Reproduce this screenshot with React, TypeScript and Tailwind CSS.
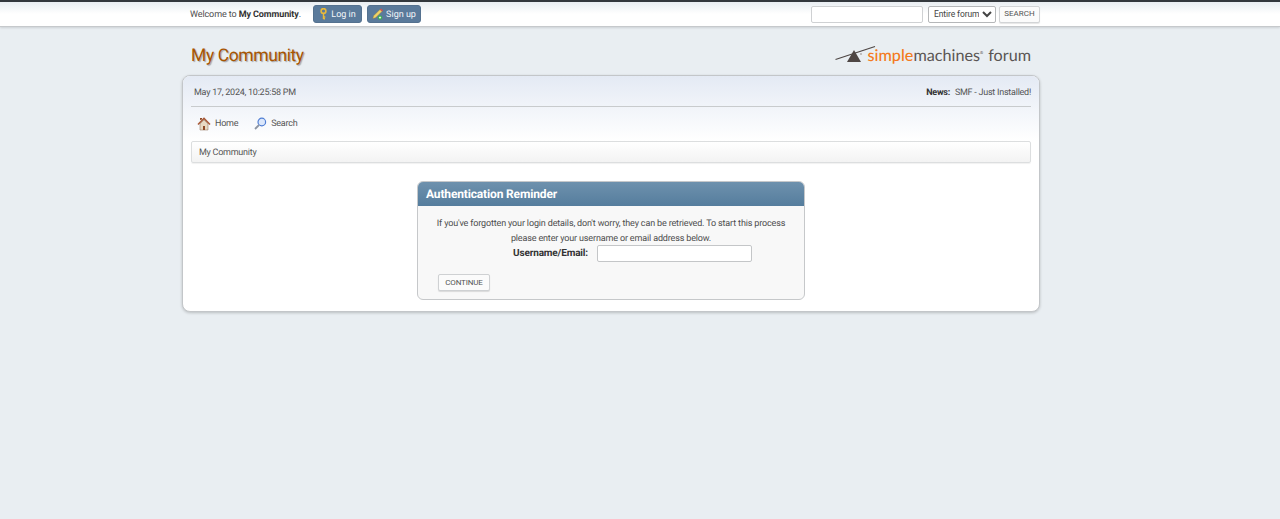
export default function App() {
  const font = { fontFamily: 'Roboto,"Open Sans",sans-serif' };
  const lato = { fontFamily: "Lato,sans-serif" };
  return (
    <div className="min-h-[519px] bg-[#e9eef2] text-[9px] tracking-[-0.25px] text-[#4d4d4d]" style={{ ...font, textRendering: "geometricPrecision" }}>
      {/* top bar */}
      <div className="h-[27px] border-t-2 border-t-[#33383d] border-b border-b-[#c6c9cc] bg-gradient-to-b from-[#e9eef2] to-white to-50% shadow-[0_1px_2px_rgba(0,0,0,0.12)]">
        <div className="ml-[182px] flex h-full w-[858px] items-center justify-between pl-[8px]">
          <div className="flex items-center">
            <span className="mt-[3px] w-[111px] whitespace-nowrap tracking-[-0.1px]">Welcome to <b className="text-[#333]">My Community</b>.</span>
            <a className="ml-[12px] flex h-[18px] w-[49px] items-center justify-center gap-[3px] rounded-[3px] border border-[#54718f] bg-[#5a7a9b] text-[#f3f6f9]">
              <svg width="9" height="12" viewBox="0 0 9 12"><circle cx="4.5" cy="3" r="2.4" fill="none" stroke="#e8b93a" strokeWidth="1.6"/><path d="M4.5 5v6M4.5 9h1.8M4.5 10.8h1.5" stroke="#e8b93a" strokeWidth="1.4" fill="none"/></svg>
              <span className="mt-[3px] tracking-normal">Log in</span>
            </a>
            <a className="ml-[5px] flex h-[18px] w-[54px] items-center justify-center gap-[2px] rounded-[3px] border border-[#54718f] bg-[#5a7a9b] text-[#f3f6f9]">
              <svg width="12" height="12" viewBox="0 0 12 12"><path d="M0.8 10.6 1.6 7.8 8 1.4 10 3.4 3.6 9.8z" fill="#f0d264" stroke="#8a7a40" strokeWidth="0.4"/><path d="M8 1.4l1-1 2 2-1 1z" fill="#d9534f"/><circle cx="8" cy="9.6" r="2.2" fill="#37b24d"/><path d="M6.9 9.6h2.2M8 8.5v2.2" stroke="#fff" strokeWidth="0.8"/></svg>
              <span className="mt-[3px] tracking-normal">Sign up</span>
            </a>
          </div>
          <div className="flex items-center">
            <input className="h-[17px] w-[112px] rounded-[2px] border border-[#cfd1d3] bg-white" />
            <select defaultValue="Entire forum" className="ml-[5px] h-[17px] w-[68px] rounded-[2px] border border-[#b5b7b9] bg-white pl-[1px] text-[8.5px] tracking-[-0.1px] text-[#444]">
              <option>Entire forum</option>
            </select>
            <button className="ml-[3px] h-[17px] w-[41px] rounded-[2px] border border-[#d2d4d6] bg-[#fbfbfb] text-[8px] font-normal tracking-normal text-[#555] shadow-[0_1px_1px_rgba(0,0,0,0.1)]">SEARCH</button>
          </div>
        </div>
      </div>

      <div className="ml-[182px] w-[858px]">
        {/* header */}
        <div className="flex h-[48px] items-center justify-between pl-[9px] pr-[9px] pt-[11px]">
          <h1 className="text-[17.5px] leading-none tracking-[-0.4px] text-[#a85400] [text-shadow:1px_1px_1px_rgba(0,0,0,0.3)]">My Community</h1>
          <div className="flex items-center tracking-normal">
            <svg width="41" height="18" viewBox="0 0 41 18" className="mr-[-8px] mt-[-5px]">
              <path d="M0.5 14.5 L40 1.5" stroke="#4e4644" strokeWidth="1.2" />
              <path d="M12 17 L19 5 L26 17Z" fill="#4e4644" />
              <circle cx="26" cy="9" r="1.1" fill="#b8b3b0" />
            </svg>
            <span className="text-[16.2px] font-medium leading-none text-[#f47a20]" style={lato}>simple</span>
            <span className="text-[16.2px] leading-none text-[#5a5553]" style={lato}>machines</span>
            <span className="mb-[6px] text-[4px] text-[#5a5553]">®</span>
            <span className="ml-[5px] text-[16.2px] leading-none text-[#5a5553]" style={lato}>forum</span>
          </div>
        </div>

        {/* wrapper */}
        <div className="h-[237px] overflow-hidden rounded-[8px] border border-[#c3c6c9] bg-white shadow-[0_1px_3px_rgba(0,0,0,0.2)]">
          <div className="bg-gradient-to-b from-[#e4eaf4] to-white px-[8px] h-[65px]">
            <div className="flex h-[31px] items-center justify-between border-b border-[#c8cbcd] pl-[3px] pt-[6px]">
              <span className="text-[#555]">May 17, 2024, 10:25:58 PM</span>
              <span className="text-[#555]"><b className="mr-[3px] text-[#333]">News:</b> SMF - Just Installed!</span>
            </div>
            <div className="flex h-[33px] items-center pl-[6px] text-[#555]">
              <svg width="14" height="14" viewBox="0 0 14 14"><path d="M3 3V1h2v1.5" fill="#8f4a26"/><path d="M1 7.5 7 1.5l6 6" fill="none" stroke="#a85b3a" strokeWidth="1.6"/><path d="M3 7v6h8V7L7 3z" fill="#e8d9c3" stroke="#8a6a50" strokeWidth="0.5"/><rect x="6" y="9" width="2" height="4" fill="#8f4a26"/></svg>
              <span className="ml-[4px] mt-[3px]">Home</span>
              <svg className="ml-[16px]" width="13" height="13" viewBox="0 0 13 13"><circle cx="7.8" cy="5" r="3.8" fill="#dbe7fb" stroke="#4f7ed4" strokeWidth="1.2"/><path d="M5 8 1 12" stroke="#8d95a3" strokeWidth="1.8"/></svg>
              <span className="ml-[4px] mt-[3px]">Search</span>
            </div>
          </div>
          <div className="mx-[8px] flex h-[22px] items-center rounded-[2px] border border-[#dcdedf] bg-gradient-to-b from-white to-[#f3f3f3] pl-[7px] pt-[3px] text-[#555] shadow-[0_1px_1px_rgba(0,0,0,0.06)]">My Community</div>

          {/* reminder */}
          <div className="mx-auto mt-[18px] w-[388px] overflow-hidden rounded-[6px] border border-[#c6c8ca] bg-[#f8f8f8]">
            <div className="-mx-px -mt-px flex h-[25px] items-center bg-gradient-to-b from-[#6f92ae] to-[#557d9d] pl-[9px] text-[12px] font-bold tracking-[-0.15px] text-white">Authentication Reminder</div>
            <div className="h-[93px] px-[16px] pt-[11px] text-center leading-[15px] tracking-[-0.15px] text-[#4d4d4d]">
              <p>If you've forgotten your login details, don't worry, they can be retrieved. To start this process please enter your username or email address below.</p>
              <div className="-mt-[2px] flex items-center justify-center pl-[43px]">
                <b className="mr-[9px] text-[10px] text-[#333]">Username/Email:</b>
                <input className="h-[17px] w-[155px] rounded-[2px] border border-[#c4c6c8] bg-white" />
              </div>
              <div className="mt-[12px] pl-[4px] text-left">
                <button className="h-[17px] w-[52px] rounded-[2px] border border-[#cfd1d3] bg-[#fbfbfb] text-[8px] text-[#555] shadow-[0_1px_1px_rgba(0,0,0,0.12)]">CONTINUE</button>
              </div>
            </div>
          </div>
        </div>
      </div>
    </div>
  );
}
